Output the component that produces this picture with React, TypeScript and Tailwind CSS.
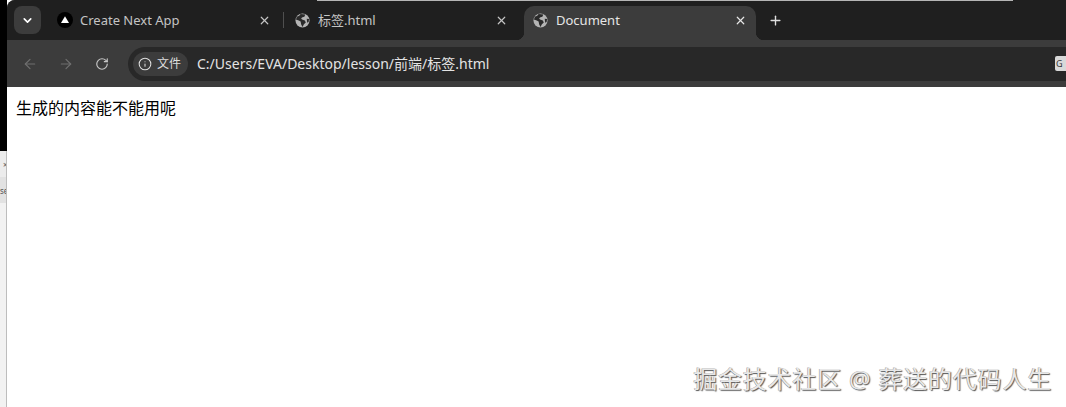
import React from 'react';
import { ArrowLeft, ArrowRight, ChevronDown, Info, Plus, RotateCw, X } from 'lucide-react';

const font = "font-['Noto_Sans','Noto_Sans_CJK_SC',sans-serif]";

const Globe = () => (
  <svg viewBox="0 0 16 16" className="w-[15px] h-[15px] shrink-0">
    <circle cx="8" cy="8" r="7.5" fill="#b4b4b4" />
    <path d="M6 1 4.5 3 2 4 1 7l3 1 2 1 .5 3L8 15l1.5-3 2-2-1-2-3-1-1-1.5 1.5-1L10 4l1-2.5z" fill="#2a2a2a" />
    <path d="M12.5 6l2.5.5-.5 3-1.5 1z" fill="#2a2a2a" />
  </svg>
);

const NextLogo = () => (
  <svg viewBox="0 0 16 16" className="w-[16px] h-[16px] shrink-0">
    <circle cx="8" cy="8" r="8" fill="#000" />
    <path d="M8 4.2 12 11H4z" fill="#fff" />
  </svg>
);

const Tab = ({ icon, title, className, titleClass }: { icon: React.ReactNode; title: string; className: string; titleClass: string }) => (
  <div className={`flex items-center ${className}`}>
    {icon}
    <span className={`text-[13px] leading-[18px] whitespace-nowrap ${titleClass}`}>{title}</span>
    <X size={13} strokeWidth={2.2} className="ml-auto shrink-0" />
  </div>
);

const App = () => {
  return (
    <div className={`flex w-[1066px] h-[407px] overflow-hidden bg-white ${font}`}>
      {/* 左边露出的另一个窗口 */}
      <div className="w-[7px] shrink-0 flex flex-col">
        <div className="h-[151px] bg-black"></div>
        <div className="flex-1 bg-[#ececec] border-r border-[#bdbdbd] flex flex-col text-[8px] leading-none text-[#555] overflow-hidden">
          <div className="h-[24px] pt-[10px] pl-[3px]">×</div>
          <div className="mt-[2px] pt-[10px] h-[26px] bg-[#e2e2e2] whitespace-nowrap">se</div>
          <div className="flex-1 bg-[#f2f2f2]"></div>
        </div>
      </div>

      <div className="flex-1 min-w-0 flex flex-col relative">
        {/* 顶部露出的浅色细线 */}
        <div className="absolute top-0 left-[310px] w-[696px] h-px bg-[#b5b5b5]"></div>
        <div className="h-[87px] shrink-0 bg-[#3c3c3c] rounded-tl-[8px] overflow-hidden flex flex-col">
          {/* 标签栏 */}
          <div className="h-[40px] shrink-0 bg-[#1f1f1f] flex items-start text-[#c4c4c4]">
            <div className="ml-[7px] mt-[6px] w-[27px] h-[28px] rounded-[8px] bg-[#3c3c3c] flex items-center justify-center text-white">
              <ChevronDown size={13} strokeWidth={3} />
            </div>
            <Tab icon={<NextLogo />} title="Create Next App" titleClass="ml-[7px]" className="ml-[16px] w-[219px] h-[40px] pr-[5px]" />
            <div className="ml-[7px] mt-[12px] w-px h-[16px] bg-[#4f4f4f]"></div>
            <Tab icon={<Globe />} title="标签.html" titleClass="ml-[8px]" className="ml-[11px] w-[214px] h-[40px] pr-[1px]" />
            <div className="ml-[15px] mt-[6px] w-[232px] h-[34px] bg-[#3c3c3c] rounded-t-[10px] pl-[9px] pr-[9px] text-[#e6e6e6] relative before:absolute before:bottom-0 before:left-[-8px] before:w-[8px] before:h-[8px] before:bg-[radial-gradient(circle_at_0_0,#1f1f1f_8px,#3c3c3c_8.5px)] after:absolute after:bottom-0 after:right-[-8px] after:w-[8px] after:h-[8px] after:bg-[radial-gradient(circle_at_100%_0,#1f1f1f_8px,#3c3c3c_8.5px)]">
              <Tab icon={<Globe />} title="Document" titleClass="ml-[8px]" className="h-[28px]" />
            </div>
            <div className="ml-[12px] h-[40px] flex items-center text-[#e0e0e0]">
              <Plus size={15} strokeWidth={2.2} />
            </div>
          </div>

          {/* 地址栏 */}
          <div className="h-[47px] flex items-center">
            <div className="ml-[15px] flex items-center text-[#6f6f6f]">
              <ArrowLeft size={16} strokeWidth={1.8} />
              <ArrowRight size={16} strokeWidth={1.8} className="ml-[20px]" />
              <RotateCw size={14} strokeWidth={2} className="ml-[21px] text-[#c6c6c6]" />
            </div>
            <div className="ml-[19px] flex-1 h-[34px] rounded-l-full bg-[#282828] flex items-center pl-[5px] relative">
              <div className="h-[24px] pl-[5px] pr-[7px] rounded-full bg-[#3c3c3c] flex items-center text-[#dedede]">
                <Info size={14} strokeWidth={1.8} />
                <span className="ml-[5px] text-[12px] leading-[16px]">文件</span>
              </div>
              <span className="ml-[9px] text-[14px] leading-[20px] text-[#e3e3e3] whitespace-nowrap">C:/Users/EVA/Desktop/lesson/前端/标签.html</span>
              <div className="absolute right-0 top-[9px] w-[11px] h-[15px] bg-[#d9d9d9] rounded-l-[2px] text-[9px] leading-[15px] text-[#333] overflow-hidden pl-[1px]">G</div>
            </div>
          </div>
        </div>

        {/* 页面内容 */}
        <div className="flex-1 relative bg-white pl-[9px] pt-[12px]">
          <p className="text-[16px] leading-[19px] text-black">生成的内容能不能用呢</p>
          <div className="absolute right-[14px] bottom-[14px] text-[24px] leading-[28px] tracking-[0.8px] text-[#e8e8e8] whitespace-nowrap [text-shadow:1px_1px_1px_#555,-0.5px_-0.5px_0_#999]">
            掘金技术社区 @ 葬送的代码人生
          </div>
        </div>
      </div>
    </div>
  );
};

export default App;
